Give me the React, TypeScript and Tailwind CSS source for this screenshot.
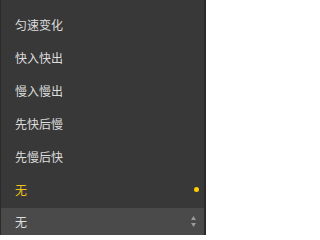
const OPTIONS = ["匀速变化", "快入快出", "慢入慢出", "先快后慢", "先慢后快", "无"];
const SELECTED = "无";

export default function App() {
  return (
    <div
      className="w-[206px] h-[235px] bg-[#2b2b2b] pl-px pr-[2px] flex flex-col overflow-hidden"
      style={{ fontFamily: '"Noto Sans CJK SC", "Liberation Sans", sans-serif' }}
    >
      <ul className="h-[208px] bg-[#383838] pt-[8px] flex flex-col">
        {OPTIONS.map(o => {
          const active = o === SELECTED;
          return (
            <li key={o} className="h-[33px] flex items-center pl-[14px] pr-[5px]">
              <span className={`flex-1 text-[12px] leading-none ${active ? "text-[#f2c21b]" : "text-[#dedede]"}`}>{o}</span>
              {active && <span className="w-[5px] h-[5px] rounded-full bg-[#ffcc00]" />}
            </li>
          );
        })}
      </ul>
      <div className="flex-1 bg-[#4a4a4a] flex items-center pl-[14px] pr-[8px]">
        <span className="flex-1 text-[12px] leading-none text-[#dedede]">{SELECTED}</span>
        <svg width="5" height="11" viewBox="0 0 5 11" className="text-[#9a9a9a]">
          <path d="M2.5 0 L5 4 L0 4 Z" fill="currentColor" />
          <path d="M0 7 L5 7 L2.5 11 Z" fill="currentColor" />
        </svg>
      </div>
    </div>
  );
}
